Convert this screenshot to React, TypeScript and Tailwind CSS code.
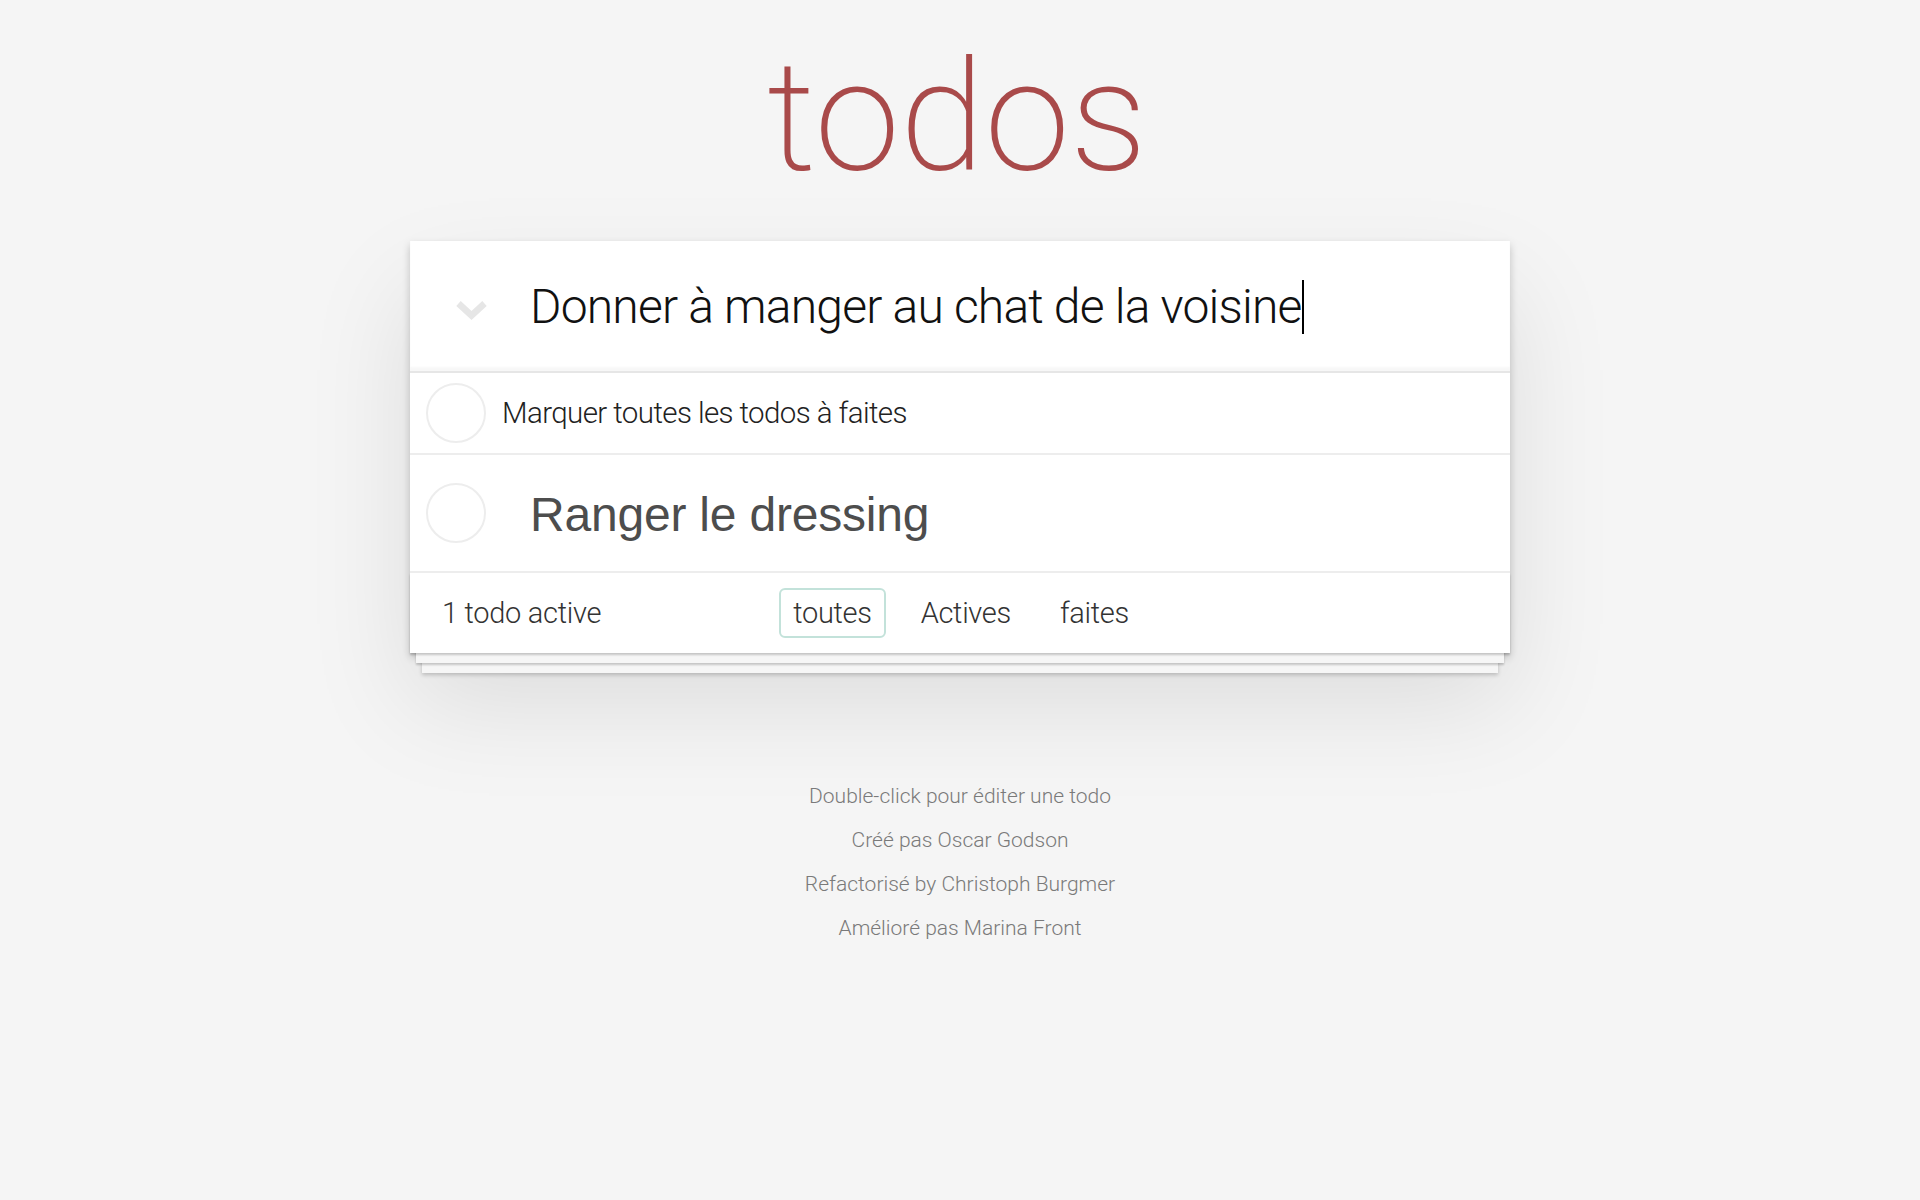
import { useState } from 'react';

const FILTERS = ['toutes', 'Actives', 'faites'];

const CREDITS = [
  'Double-click pour éditer une todo',
  'Créé pas Oscar Godson',
  'Refactorisé by Christoph Burgmer',
  'Amélioré pas Marina Front',
];

function Circle() {
  return <span className="block w-[60px] h-[60px] shrink-0 rounded-full border-2 border-[#ededed]" />;
}

export default function App() {
  const [filter, setFilter] = useState('toutes');

  return (
    <div className="min-h-screen bg-[#f5f5f5] font-['Roboto',sans-serif] font-light text-[#4d4d4d]">
      <div className="mx-auto w-[1100px] flex flex-col">
        <h1 className="h-[241px] pt-[41px] pr-[6px] text-center text-[154px] leading-[154px] font-extralight text-[#a94a4a]">
          todos
        </h1>

        <section className="bg-white shadow-[0_4px_8px_0_rgba(0,0,0,0.2),0_50px_100px_0_rgba(0,0,0,0.1)]">
          {/* new todo */}
          <div className="relative h-[130px] pt-[32px] pl-[120px] shadow-[inset_0_-4px_2px_rgba(0,0,0,0.03)]">
            <svg
              className="absolute left-[46px] top-[60px]"
              width="31"
              height="19"
              viewBox="0 0 31 19"
              fill="none"
            >
              <polyline points="2.5,2.5 15.5,14.5 28.5,2.5" stroke="#e6e6e6" strokeWidth="6.5" />
            </svg>
            <div className="flex items-center text-[48px] leading-[67.2px] tracking-[-0.8px] text-[#111]">
              <span>Donner à manger au chat de la voisine</span>
              <span className="block w-[2px] h-[54px] bg-black" />
            </div>
          </div>

          <ul className="border-t-2 border-[#e6e6e6]">
            <li className="h-[82px] flex items-center pl-[16px] border-b-2 border-[#ededed]">
              <Circle />
              <span className="ml-[16px] text-[29.5px] leading-[36px] tracking-[-0.6px] text-[#222]">
                Marquer toutes les todos à faites
              </span>
            </li>
            <li className="h-[118px] flex items-center pl-[16px] border-b-2 border-[#ededed]">
              <Circle />
              <span className="ml-[44px] mt-[4px] font-['Liberation_Sans',Arial,sans-serif] font-normal text-[48px] leading-[57.6px] tracking-[-0.2px] text-[#4d4d4d]">
                Ranger le dressing
              </span>
            </li>
          </ul>

          <footer className="h-[80px] px-[32px] grid grid-cols-[1fr_auto_1fr] items-center text-[29px] leading-[40px] tracking-[-0.3px] text-[#333] shadow-[0_2px_2px_rgba(0,0,0,0.2),0_16px_0_-6px_#f6f6f6,0_18px_2px_-6px_rgba(0,0,0,0.2),0_32px_0_-12px_#f6f6f6,0_34px_4px_-12px_rgba(0,0,0,0.2)]">
            <span>1 todo active</span>
            <div className="flex items-center gap-[21px] pl-[2px]">
              {FILTERS.map((f) => (
                <button
                  key={f}
                  onClick={() => setFilter(f)}
                  className={`h-[50px] px-[12px] rounded-[6px] border-2 ${
                    filter === f ? 'border-[#c3e2da]' : 'border-transparent'
                  }`}
                >
                  {f}
                </button>
              ))}
            </div>
            <span />
          </footer>
        </section>

        <div className="mt-[121px] flex flex-col items-center text-[21px] leading-[44px] text-[#7a7a7a]">
          {CREDITS.map((c) => (
            <p key={c}>{c}</p>
          ))}
        </div>
      </div>
    </div>
  );
}
